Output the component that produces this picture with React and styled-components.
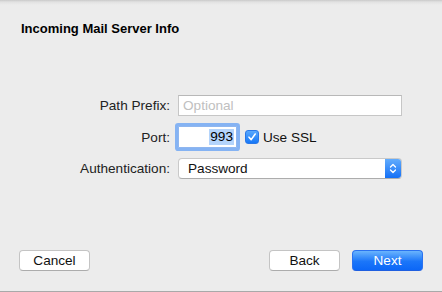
import React from 'react'
import styled, { createGlobalStyle } from 'styled-components'

const Global = createGlobalStyle`
    html, body { margin: 0; padding: 0; background: #ececec; }
    * { box-sizing: border-box; }
`

const Sheet = styled.div`
    width: 442px;
    height: 292px;
    display: flex;
    flex-direction: column;
    background: linear-gradient(#c9c9c9 0px, #e2e2e2 2px, #ececec 5px, #ececec);
    border-bottom: 1px solid #a9a9a9;
    font-family: "Liberation Sans", Arial, sans-serif;
    font-size: 13.6px;
    color: #1a1a1a;
`

const Title = styled.h1`
    margin: 0;
    padding: 21px 0 0 21px;
    font-size: 13px;
    line-height: 16px;
    font-weight: bold;
    color: #000;
`

const Form = styled.div`
    display: grid;
    grid-template-columns: 170px 224px;
    column-gap: 8px;
    grid-auto-rows: 21px;
    row-gap: 10.5px;
    margin-top: 58px;
    align-items: center;
`

const Label = styled.label`
    text-align: right;
    line-height: 21px;
    color: #222;
`

const Field = styled.div`
    height: 21px;
    display: flex;
    align-items: center;
    padding: 0 4px;
    background: #fff;
    border: 1px solid #c6c6c6;
    border-top-color: #b8b8b8;
    color: ${p => (p.$placeholder ? '#c0c0c0' : '#111')};
`

const PortRow = styled.div`
    display: flex;
    align-items: center;
    height: 21px;
`

const PortField = styled.div`
    width: 59px;
    height: 22px;
    display: flex;
    align-items: center;
    justify-content: flex-end;
    padding-right: 2px;
    background: #fff;
    border: 1px solid #8fb6ef;
    border-radius: 1px;
    box-shadow: 0 0 0 3px #85b3f3;
    color: #000;
`

const Selected = styled.span`
    background: #b4d4fb;
    line-height: 16px;
    padding: 0 1px;
`

const Check = styled.span`
    width: 14px;
    height: 14px;
    margin-left: 8px;
    border-radius: 3px;
    background: linear-gradient(#5aa9fd, #1677f7);
    border: 1px solid #2a78e8;
    display: flex;
    align-items: center;
    justify-content: center;
`

const CheckText = styled.span`
    margin-left: 4px;
    color: #111;
`

const Popup = styled.div`
    height: 21px;
    display: flex;
    background: #fff;
    border: 1px solid #c9c9c9;
    border-bottom-color: #acacac;
    border-radius: 4px;
    overflow: hidden;
`

const PopupText = styled.span`
    flex: 1;
    padding-left: 9px;
    line-height: 19px;
    color: #111;
`

const Stepper = styled.span`
    width: 16px;
    background: linear-gradient(#62acfd, #1470f6);
    display: flex;
    align-items: center;
    justify-content: center;
`

const Footer = styled.div`
    margin-top: auto;
    display: flex;
    align-items: center;
    padding: 0 19px 20px 19px;
    gap: 12px;
`

const Button = styled.button`
    width: 71px;
    height: 21px;
    padding: 0;
    font-family: inherit;
    font-size: 13.6px;
    border-radius: 4px;
    border: 1px solid ${p => (p.$primary ? '#2a72f0' : '#c4c4c4')};
    border-bottom-color: ${p => (p.$primary ? '#1f5fe0' : '#acacac')};
    background: ${p => (p.$primary ? 'linear-gradient(#6ab4fd, #1b76f9 55%, #0c67f7)' : '#fff')};
    color: ${p => (p.$primary ? '#fff' : '#111')};
    ${p => p.$push && 'margin-left: auto;'}
`

export default function App() {
    return (
        <>
            <Global />
            <Sheet>
                <Title>Incoming Mail Server Info</Title>
                <Form>
                    <Label>Path Prefix:</Label>
                    <Field $placeholder>Optional</Field>
                    <Label>Port:</Label>
                    <PortRow>
                        <PortField>
                            <Selected>993</Selected>
                        </PortField>
                        <Check>
                            <svg width="10" height="10" viewBox="0 0 10 10">
                                <path d="M2 5.2 L4.2 7.6 L8.2 2" fill="none" stroke="#fff" strokeWidth="1.6" strokeLinecap="round" strokeLinejoin="round" />
                            </svg>
                        </Check>
                        <CheckText>Use SSL</CheckText>
                    </PortRow>
                    <Label>Authentication:</Label>
                    <Popup>
                        <PopupText>Password</PopupText>
                        <Stepper>
                            <svg width="8" height="13" viewBox="0 0 8 13">
                                <path d="M1.5 5 L4 2.5 L6.5 5 M1.5 8 L4 10.5 L6.5 8" fill="none" stroke="#fff" strokeWidth="1.3" strokeLinecap="round" strokeLinejoin="round" />
                            </svg>
                        </Stepper>
                    </Popup>
                </Form>
                <Footer>
                    <Button>Cancel</Button>
                    <Button $push>Back</Button>
                    <Button $primary>Next</Button>
                </Footer>
            </Sheet>
        </>
    )
}
